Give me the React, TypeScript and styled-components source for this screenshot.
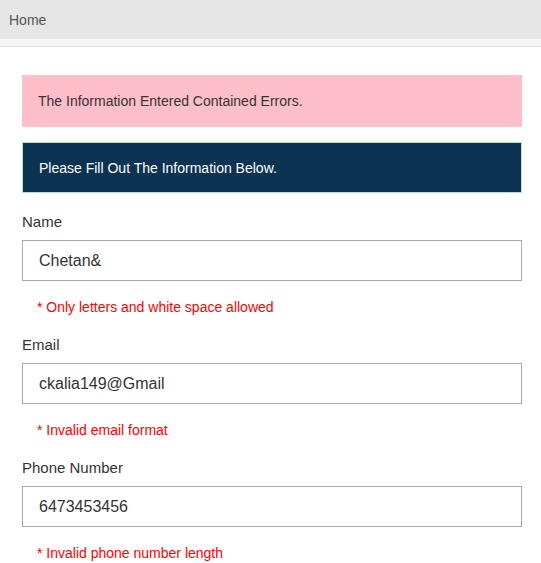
import React from "react";
import { styled, createGlobalStyle } from "styled-components";

type Field = {
  label: string;
  value: string;
  error: string;
};

const fields: Field[] = [
  { label: "Name", value: "Chetan&", error: "* Only letters and white space allowed" },
  { label: "Email", value: "ckalia149@Gmail", error: "* Invalid email format" },
  { label: "Phone Number", value: "6473453456", error: "* Invalid phone number length" },
];

export default function App() {
  return (
    <>
      <GlobalStyle />
      <Nav>
        <NavLink href="#">Home</NavLink>
      </Nav>
      <NavShadow />

      <Main>
        <Alert $variant="error">The Information Entered Contained Errors.</Alert>
        <Alert $variant="info">Please Fill Out The Information Below.</Alert>

        <Form onSubmit={(e) => e.preventDefault()}>
          {fields.map((field) => (
            <FieldGroup key={field.label}>
              <Label>{field.label}</Label>
              <Input type="text" defaultValue={field.value} />
              <ErrorText>{field.error}</ErrorText>
            </FieldGroup>
          ))}
        </Form>
      </Main>
    </>
  );
}

const GlobalStyle = createGlobalStyle`
  * {
    box-sizing: border-box;
  }

  body {
    margin: 0;
    background: #fff;
    font-family: "Liberation Sans", Arial, sans-serif;
    color: #333;
  }
`;

const Nav = styled.nav`
  height: 39px;
  padding: 0 9px;
  display: flex;
  align-items: center;
  background: #e6e6e6;
`;

const NavLink = styled.a`
  color: #555;
  font-size: 14px;
  text-decoration: none;
`;

const NavShadow = styled.div`
  height: 8px;
  background: #f5f5f5;
  border-bottom: 1px solid #e3e3e3;
`;

const Main = styled.main`
  width: 500px;
  margin-left: 22px;
  padding-top: 28px;
`;

const Alert = styled.div<{ $variant: "error" | "info" }>`
  display: flex;
  align-items: center;
  padding: 0 16px;
  font-size: 14px;
  height: ${({ $variant }) => ($variant === "error" ? "52px" : "51px")};
  margin-bottom: ${({ $variant }) => ($variant === "error" ? "15px" : "0")};
  background: ${({ $variant }) => ($variant === "error" ? "#ffbfca" : "#0d3352")};
  color: ${({ $variant }) => ($variant === "error" ? "#333" : "#fff")};
  border: ${({ $variant }) => ($variant === "error" ? "none" : "1px solid #b8e0c4")};
`;

const Form = styled.form`
  display: flex;
  flex-direction: column;
  padding-top: 20px;
  gap: 21px;
`;

const FieldGroup = styled.div`
  display: flex;
  flex-direction: column;
`;

const Label = styled.label`
  font-size: 15px;
  line-height: 17px;
  color: #333;
  margin-bottom: 10px;
`;

const Input = styled.input`
  width: 100%;
  height: 41px;
  padding: 0 16px;
  border: 1px solid #a9a9a9;
  border-radius: 0;
  font-family: "Liberation Sans", Arial, sans-serif;
  font-size: 16px;
  color: #333;
  outline: none;
`;

const ErrorText = styled.span`
  margin-top: 18px;
  padding-left: 15px;
  font-size: 14px;
  line-height: 16px;
  color: #ff0000;
`;
